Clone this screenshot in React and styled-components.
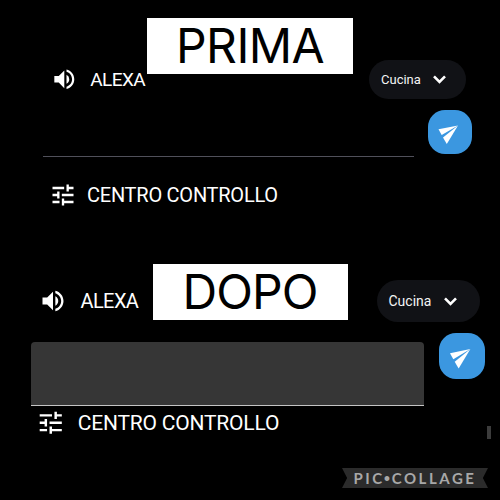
import React from 'react';
import styled, {createGlobalStyle} from 'styled-components';
import {MdTune, MdVolumeUp} from 'react-icons/md';

const GlobalStyle = createGlobalStyle`
    body {
        margin: 0;
        background: #000000;
        overflow: hidden;
    }
`;

const Main = styled.div`
    position: relative;
    width: 500px;
    height: 500px;
    overflow: hidden;
    background: #000000;
    color: #ffffff;
    font-family: Roboto, sans-serif;
`;

const Panel = styled.section`
    position: relative;
    box-sizing: border-box;
    height: 250px;
    padding-top: ${({$top}) => $top}px;
`;

const Header = styled.div`
    display: flex;
    align-items: center;
    justify-content: space-between;
    height: ${({$height}) => $height}px;
    padding-left: ${({$left}) => $left}px;
    padding-right: ${({$right}) => $right}px;
`;

const Title = styled.div`
    display: flex;
    align-items: center;
    height: 30px;
    gap: ${({$gap}) => $gap}px;
    font-size: ${({$size}) => $size}px;
    line-height: 30px;
    letter-spacing: ${({$spacing}) => $spacing || 0}px;
    white-space: nowrap;

    svg {
        flex: none;
    }
`;

const Select = styled.button`
    display: flex;
    align-items: center;
    justify-content: space-between;
    box-sizing: border-box;
    width: ${({$width}) => $width}px;
    height: 100%;
    padding: 0 ${({$right}) => $right}px 0 12px;
    border: 0;
    border-radius: 21px;
    background: #111216;
    color: #f4f4f4;
    font-family: Roboto, sans-serif;
    font-size: ${({$size}) => $size}px;
    letter-spacing: ${({$spacing}) => $spacing}px;
`;

const InputRow = styled.div`
    display: flex;
    justify-content: space-between;
    align-items: flex-start;
    box-sizing: border-box;
    height: ${({$height}) => $height}px;
    margin-top: 11px;
    padding-left: ${({$left}) => $left}px;
    padding-right: ${({$right}) => $right}px;
`;

const Field = styled.div`
    box-sizing: border-box;
    width: ${({$width}) => $width}px;
    height: ${({$height}) => $height}px;
    margin-top: ${({$top}) => $top || 0}px;
    border-bottom: 1px solid ${({$filled}) => ($filled ? '#c4c4c4' : '#50505a')};
    border-radius: ${({$filled}) => ($filled ? '4px 4px 0 0' : '0')};
    background: ${({$filled}) => ($filled ? '#363636' : 'transparent')};
`;

const Send = styled.button`
    display: flex;
    width: ${({$size}) => $size}px;
    height: ${({$size}) => $size}px;
    padding: 0;
    border: 0;
    border-radius: 17px;
    background: #3b97e0;
`;

const Footer = styled.div`
    display: flex;
    margin-top: ${({$top}) => $top}px;
    padding-left: ${({$left}) => $left}px;
`;

const Sticker = styled.div`
    position: absolute;
    left: ${({$left}) => $left}px;
    top: ${({$top}) => $top}px;
    display: flex;
    align-items: center;
    justify-content: center;
    width: ${({$width}) => $width}px;
    height: 56px;
    background: #ffffff;
    color: #000000;
    font-family: Inter, sans-serif;
    font-size: 48px;
    letter-spacing: ${({$spacing}) => $spacing}px;
`;

const Scrollbar = styled.div`
    position: absolute;
    left: 487px;
    top: 426px;
    width: 4px;
    height: 13px;
    background: #3c3c3c;
`;

const Ribbon = styled.div`
    position: absolute;
    left: 342px;
    top: 468px;
    display: flex;
    align-items: center;
    justify-content: center;
    box-sizing: border-box;
    width: 146px;
    height: 20px;
    padding-bottom: 1px;
    background: #2b2b2b;
    color: #a8a8a8;
    clip-path: polygon(0 0, 100% 0, 96.5% 50%, 100% 100%, 0 100%, 3.5% 50%);
    font-family: Lato, sans-serif;
    font-size: 15px;
    font-weight: 700;
    letter-spacing: 2.55px;
    white-space: nowrap;
`;

const Bullet = styled.span`
    margin-left: -1px;
    font-size: 11px;
    letter-spacing: 1.5px;
`;

const Chevron = () => (
    <svg width="13" height="9" viewBox="0 0 13 9">
        <path d="M1 1.3L6.5 6.9L12 1.3" fill="none" stroke="#fff" strokeWidth="2.6" />
    </svg>
);

const Plane = () => (
    <svg width="100%" height="100%" viewBox="0 0 44 44">
        <path d="M10.5 19.3L30 15.4L13.7 25Z" fill="#fff" />
        <path d="M30 15.4L18.8 34L15 27.6Z" fill="#fff" />
    </svg>
);

const App = () => {
    return <Main>
        <GlobalStyle />

        <Panel $top={60}>
            <Header $height={39} $left={50.7} $right={34}>
                <Title $size={19} $gap={13} $spacing={-0.6}>
                    <MdVolumeUp size={26.6} />
                    <span>ALEXA</span>
                </Title>
                <Select $width={97} $right={20.5} $size={13} $spacing={0}>
                    Cucina
                    <Chevron />
                </Select>
            </Header>
            <InputRow $height={47} $left={43} $right={28}>
                <Field $width={371} $height={47} />
                <Send $size={44}><Plane /></Send>
            </InputRow>
            <Footer $top={23} $left={48.5}>
                <Title $size={20} $gap={10.5} $spacing={-0.25}>
                    <MdTune size={28} />
                    <span>CENTRO CONTROLLO</span>
                </Title>
            </Footer>
            <Sticker $left={147} $top={17.5} $width={206} $spacing={-0.6}>PRIMA</Sticker>
        </Panel>

        <Panel $top={30}>
            <Header $height={42} $left={38.5} $right={20.5}>
                <Title $size={20} $gap={14} $spacing={-0.6}>
                    <MdVolumeUp size={28} />
                    <span>ALEXA</span>
                </Title>
                <Select $width={103} $right={22.5} $size={14} $spacing={0}>
                    Cucina
                    <Chevron />
                </Select>
            </Header>
            <InputRow $height={73} $left={31} $right={15}>
                <Field $filled $width={393} $height={64} $top={9} />
                <Send $size={46}><Plane /></Send>
            </InputRow>
            <Footer $top={2} $left={36.3}>
                <Title $size={21} $gap={12} $spacing={-0.2}>
                    <MdTune size={29.5} />
                    <span>CENTRO CONTROLLO</span>
                </Title>
            </Footer>
            <Sticker $left={152.5} $top={13.5} $width={195} $spacing={-0.9}>DOPO</Sticker>
        </Panel>

        <Scrollbar />
        <Ribbon>PIC<Bullet>•</Bullet>COLLAGE</Ribbon>
    </Main>
}

export default App;
